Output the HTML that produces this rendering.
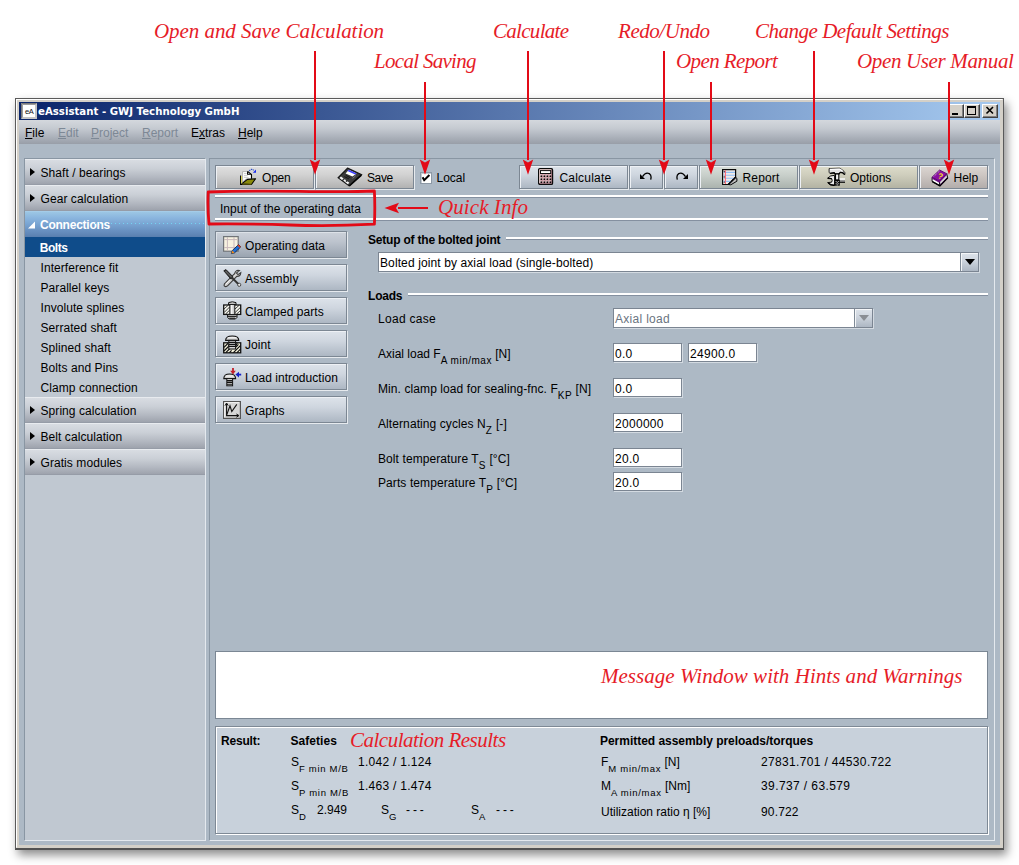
<!DOCTYPE html>
<html><head><meta charset="utf-8"><title>eAssistant</title>
<style>
html,body{margin:0;padding:0;background:#fff;}
body{width:1019px;height:865px;position:relative;overflow:hidden;font:12px "Liberation Sans",sans-serif;color:#000;}
.a{position:absolute;white-space:nowrap;}
.hw{position:absolute;white-space:nowrap;color:#e61c28;font-family:"Liberation Serif",serif;font-style:italic;font-size:21px;line-height:24px;}
#win{position:absolute;left:15px;top:98px;width:989px;height:752px;background:#adb9c5;box-sizing:border-box;
 border:1px solid #5a5a5a;border-bottom:2px solid #525252;box-shadow:3px 5px 9px rgba(0,0,0,.45);}
#frame{position:absolute;left:0;top:0;right:0;bottom:0;border:1px solid #fff;border-right-color:#d4d0c8;border-bottom-color:#d4d0c8;box-shadow:inset 0 0 0 2px #d4d0c8;}
#title{position:absolute;left:19px;top:102px;width:981px;height:18px;background:linear-gradient(90deg,#0a246a 0%,#a6caf0 100%);}
#title .t{position:absolute;left:19px;top:3px;font:bold 10.2px "DejaVu Sans",sans-serif;color:#fff;line-height:14px;white-space:nowrap;}
#menu{position:absolute;left:19px;top:120px;width:981px;height:24px;background:linear-gradient(180deg,#d4d8dd 0%,#c5cad1 35%,#abb1ba 72%,#989ea8 100%);}
.mi{position:absolute;top:126px;line-height:14px;white-space:nowrap;}
.mi.d{color:#7d8895;}
.mi u{text-decoration:underline;}
.wb{position:absolute;top:104px;width:14px;height:12px;background:#d4d0c8;border:1px solid;border-color:#fff #404040 #404040 #fff;box-shadow:inset -1px -1px 0 #808080;}
#side{position:absolute;left:24px;top:158px;width:182px;height:683px;box-sizing:border-box;background:#c0c8d1;border:1px solid #8996a3;border-right-color:#e4e9ee;border-bottom-color:#e4e9ee;}
.sh{position:absolute;left:25px;width:180px;height:26px;box-sizing:border-box;background:linear-gradient(180deg,#d8dce2 0%,#cbd0d7 35%,#b4b9c2 70%,#9ea3ad 100%);border-top:1px solid #e8ebef;border-bottom:1px solid #969ca7;}
.sh span,.si{position:absolute;left:15.5px;line-height:14px;white-space:nowrap;letter-spacing:.07px;}
.sh span{top:6px;}
.sh i{position:absolute;left:5px;top:7.5px;width:0;height:0;border-left:5.5px solid #000;border-top:4.8px solid transparent;border-bottom:4.8px solid transparent;}
.si{left:40.5px;}
#main{position:absolute;left:209px;top:158px;width:786px;height:683px;box-sizing:border-box;border:1px solid #8996a3;border-right-color:#e4e9ee;border-bottom-color:#e4e9ee;}
.btn{position:absolute;box-sizing:border-box;border:1px solid #7c8793;box-shadow:inset 1px 1px 0 #eef1f5,1px 1px 0 #e6eaee;background:linear-gradient(180deg,#dde3ea 0%,#cfd6df 40%,#adb7c3 100%);}
.btn.w{background:linear-gradient(180deg,#e4e2dc 0%,#d2d1cb 45%,#b9bab6 100%);}
.btn span{position:absolute;line-height:14px;white-space:nowrap;letter-spacing:0;}
.sep{position:absolute;height:2px;background:#fff;box-shadow:0 1px 0 #8490a0;}
.inp{position:absolute;box-sizing:border-box;height:19px;background:#fff;border:1px solid #7b8592;box-shadow:1px 1px 0 #d3dae1;}
.inp span{position:absolute;left:1px;top:2px;line-height:14px;letter-spacing:.3px;}
sub{font-size:10px;vertical-align:baseline;position:relative;top:6px;line-height:0;letter-spacing:.5px;}
.l{letter-spacing:.3px;}
.r sub{font-size:9.5px;letter-spacing:.7px;}
</style></head><body>

<div id="win"><div id="frame"></div></div>
<div id="title"><div class="t">eAssistant - GWJ Technology GmbH</div></div>
<div id="menu"></div>

<!-- title icon + window buttons -->
<svg class="a" style="left:21px;top:103px" width="16" height="16" viewBox="0 0 16 16"><rect x="0" y="0" width="16" height="16" fill="#c4c4c4"/><path d="M0.5 15.5 V0.5 H15.5" fill="none" stroke="#7a7a7a"/><path d="M1.5 14.5 V1.5 H14.5" fill="none" stroke="#9c9c9c"/><rect x="2" y="2" width="12" height="12" fill="#fff"/><text x="8.2" y="11.4" font-family="Liberation Sans, sans-serif" font-size="7.5" text-anchor="middle" fill="#111" letter-spacing="-.3">eA</text></svg>
<div class="wb" style="left:948px"><div class="a" style="left:3px;top:8px;width:6px;height:2px;background:#000"></div></div>
<div class="wb" style="left:964px"><div class="a" style="left:2px;top:1px;width:7px;height:6px;border:1px solid #000;border-top-width:2px"></div></div>
<div class="wb" style="left:982px"><svg class="a" style="left:2px;top:1px" width="10" height="9" viewBox="0 0 10 9"><path d="M1.5 1 L8 7.5 M8 1 L1.5 7.5" stroke="#000" stroke-width="1.6" fill="none"/></svg></div>

<!-- menu -->
<div class="mi" style="left:25px"><u>F</u>ile</div>
<div class="mi d" style="left:58px"><u>E</u>dit</div>
<div class="mi d" style="left:91px"><u>P</u>roject</div>
<div class="mi d" style="left:142px"><u>R</u>eport</div>
<div class="mi" style="left:191px">E<u>x</u>tras</div>
<div class="mi" style="left:238px"><u>H</u>elp</div>

<!-- sidebar -->
<div id="side"></div>
<div class="sh" style="top:159px"><i></i><span>Shaft / bearings</span></div>
<div class="sh" style="top:185px"><i></i><span>Gear calculation</span></div>
<div class="sh" style="top:211px;background:linear-gradient(180deg,#9cc6e4 0%,#8ab5de 25%,#79a4d2 50%,#6a92c2 75%,#5c82b2 100%);border-top-color:#a4cce8;border-bottom-color:#5a80b0;color:#fff;font-weight:bold"><svg class="a" style="left:3px;top:9px" width="8" height="8" viewBox="0 0 8 8"><path d="M7 0.5 L7 7.5 L0 7.5 Z" fill="#fff"/></svg><span style="letter-spacing:-.24px;left:15px">Connections</span><div class="a" style="left:70px;top:11px;width:110px;height:1px;background:repeating-linear-gradient(90deg,#74d4f4 0 1px,transparent 1px 4px)"></div></div>
<div class="a" style="left:25px;top:237px;width:180px;height:20px;background:#0f4c8a"></div>
<div class="si" style="top:241px;color:#fff;font-weight:bold;letter-spacing:-.5px;margin-left:-.7px">Bolts</div>
<div class="si" style="top:261px">Interference fit</div>
<div class="si" style="top:281px">Parallel keys</div>
<div class="si" style="top:301px">Involute splines</div>
<div class="si" style="top:321px">Serrated shaft</div>
<div class="si" style="top:341px">Splined shaft</div>
<div class="si" style="top:361px">Bolts and Pins</div>
<div class="si" style="top:381px">Clamp connection</div>
<div class="sh" style="top:397px"><i></i><span>Spring calculation</span></div>
<div class="sh" style="top:423px"><i></i><span>Belt calculation</span></div>
<div class="sh" style="top:449px"><i></i><span>Gratis modules</span></div>

<div id="main"></div>

<!-- toolbar -->
<div class="btn" style="left:215px;top:165px;width:99px;height:24px;background:linear-gradient(180deg,#e0e0e0 0%,#d2d2d2 40%,#b2b2b2 100%)"><span style="left:46px;top:5px;letter-spacing:-.2px">Open</span></div>
<div class="btn" style="left:315px;top:165px;width:99px;height:24px;background:linear-gradient(180deg,#e0e0e0 0%,#d2d2d2 40%,#b2b2b2 100%)"><span style="left:51px;top:5px;letter-spacing:-.4px">Save</span></div>
<div class="a" style="left:420px;top:172px;width:12px;height:12px;box-sizing:border-box;background:#fff;border:1px solid #8d99a6;box-shadow:inset 1px 1px 0 #c4ccd4"></div>
<svg class="a" style="left:421px;top:173px" width="10" height="10" viewBox="0 0 10 10"><path d="M1.6 4.2 L3.2 7.2 L8.4 2" stroke="#000" stroke-width="2" fill="none"/></svg>
<div class="a" style="left:436.5px;top:171px;line-height:14px">Local</div>
<div class="btn" style="left:519px;top:165px;width:109px;height:24px"><span style="left:39.5px;top:5px;letter-spacing:.2px">Calculate</span></div>
<div class="btn" style="left:629px;top:165px;width:34px;height:24px"></div>
<div class="btn" style="left:664px;top:165px;width:34px;height:24px"></div>
<div class="btn" style="left:699px;top:165px;width:99px;height:24px;background:linear-gradient(180deg,#d9dfda 0%,#c9d0cb 40%,#abb3ae 100%)"><span style="left:42.5px;top:5px;letter-spacing:.15px">Report</span></div>
<div class="btn" style="left:799px;top:165px;width:119px;height:24px;background:linear-gradient(180deg,#dddccb 0%,#cfcebd 40%,#b3b3a3 100%)"><span style="left:50px;top:5px">Options</span></div>
<div class="btn" style="left:919px;top:165px;width:69px;height:24px;background:linear-gradient(180deg,#dcd6d2 0%,#cec7c3 40%,#b3adab 100%)"><span style="left:33.5px;top:5px">Help</span></div>

<!-- quick info -->
<div class="sep" style="left:215px;top:195px;width:773px"></div>
<div class="a" style="left:220px;top:202px;line-height:14px;letter-spacing:.03px">Input of the operating data</div>
<div class="sep" style="left:215px;top:218px;width:773px"></div>

<!-- left nav buttons -->
<div class="btn" style="left:215px;top:231px;width:132px;height:27px;background:linear-gradient(180deg,#cbd1d9 0%,#bcc3cd 40%,#9aa4b0 100%);box-shadow:inset 1px 1px 0 #dde2e8,1px 1px 0 #e6eaee"><span style="left:29px;top:7px;letter-spacing:.05px">Operating data</span></div>
<div class="btn" style="left:215px;top:264px;width:132px;height:27px"><span style="left:29px;top:7px;letter-spacing:.2px">Assembly</span></div>
<div class="btn" style="left:215px;top:297px;width:132px;height:27px"><span style="left:29px;top:7px;letter-spacing:.05px">Clamped parts</span></div>
<div class="btn" style="left:215px;top:330px;width:132px;height:27px"><span style="left:29px;top:7px;letter-spacing:.05px">Joint</span></div>
<div class="btn" style="left:215px;top:363px;width:132px;height:27px"><span style="left:29px;top:7px;letter-spacing:.05px">Load introduction</span></div>
<div class="btn" style="left:215px;top:396px;width:132px;height:27px"><span style="left:29px;top:7px;letter-spacing:.05px">Graphs</span></div>

<!-- form -->
<div class="a" style="left:368px;top:233px;line-height:14px;font-weight:bold;letter-spacing:-.2px">Setup of the bolted joint</div>
<div class="sep" style="left:506px;top:237px;width:482px"></div>
<div class="inp" style="left:378px;top:252px;width:601px;height:20px"><span style="letter-spacing:.11px;left:1px;top:3px">Bolted joint by axial load (single-bolted)</span></div>
<div class="btn" style="left:960px;top:253px;width:18px;height:18px;border:none;border-left:1px solid #7f8a96;box-shadow:inset 1px 1px 0 #f4f6f8"><svg class="a" style="left:4px;top:6px" width="10" height="6" viewBox="0 0 10 6"><path d="M0 0 H10 L5 6 Z" fill="#000"/></svg></div>
<div class="a" style="left:368px;top:289px;line-height:14px;font-weight:bold;letter-spacing:-.2px">Loads</div>
<div class="sep" style="left:408px;top:293px;width:580px"></div>

<div class="a l" style="left:378px;top:312px;line-height:14px">Load case</div>
<div class="inp" style="left:613px;top:308px;width:260px;height:20px"><span style="color:#6a7480;top:3px">Axial load</span></div>
<div class="btn" style="left:854px;top:309px;width:18px;height:18px;border:none;border-left:1px solid #7f8a96;box-shadow:inset 1px 1px 0 #f4f6f8"><svg class="a" style="left:4px;top:6px" width="10" height="6" viewBox="0 0 10 6"><path d="M0 0 H10 L5 6 Z" fill="#8a8e94"/></svg></div>

<div class="a" style="left:378px;top:347px;line-height:14px">Axial load F<sub>A min/max</sub> [N]</div>
<div class="inp" style="left:613px;top:343px;width:69px;height:19px"><span style="top:3px">0.0</span></div>
<div class="inp" style="left:688px;top:343px;width:69px;height:19px"><span style="top:3px">24900.0</span></div>

<div class="a" style="left:378px;top:382px;line-height:14px;letter-spacing:.09px">Min. clamp load for sealing-fnc. F<sub>KP</sub> [N]</div>
<div class="inp" style="left:613px;top:378px;width:69px;height:19px"><span style="top:3px">0.0</span></div>

<div class="a" style="left:378px;top:417px;line-height:14px;letter-spacing:.09px">Alternating cycles N<sub>Z</sub> [-]</div>
<div class="inp" style="left:613px;top:413px;width:69px;height:19px"><span style="top:3px">2000000</span></div>

<div class="a" style="left:378px;top:452px;line-height:14px;letter-spacing:.09px">Bolt temperature T<sub>S</sub> [°C]</div>
<div class="inp" style="left:613px;top:448px;width:69px;height:19px"><span style="top:3px">20.0</span></div>
<div class="a" style="left:378px;top:476px;line-height:14px;letter-spacing:.09px">Parts temperature T<sub>P</sub> [°C]</div>
<div class="inp" style="left:613px;top:472px;width:69px;height:19px"><span style="top:3px">20.0</span></div>

<!-- message window -->
<div class="a" style="left:215px;top:651px;width:773px;height:68px;box-sizing:border-box;background:#fff;border:1px solid #7b8794"></div>

<!-- result panel -->
<div class="a" style="left:215px;top:726px;width:773px;height:108px;box-sizing:border-box;background:#c8d1db;border:1px solid #7e8995;box-shadow:inset 1px 1px 0 #fff,1px 1px 0 #fff"></div>
<div class="a" style="left:221px;top:734px;line-height:14px;font-weight:bold;letter-spacing:-.2px">Result:</div>
<div class="a" style="left:290.5px;top:734px;line-height:14px;font-weight:bold;letter-spacing:.05px">Safeties</div>
<div class="a r" style="left:291px;top:755px;line-height:14px">S<sub>F min M/B</sub></div>
<div class="a" style="left:358px;top:755px;line-height:14px;letter-spacing:.27px">1.042 / 1.124</div>
<div class="a r" style="left:291px;top:779px;line-height:14px">S<sub>P min M/B</sub></div>
<div class="a" style="left:358px;top:779px;line-height:14px;letter-spacing:.27px">1.463 / 1.474</div>
<div class="a r" style="left:291px;top:803px;line-height:14px">S<sub>D</sub></div>
<div class="a" style="left:317px;top:803px;line-height:14px;letter-spacing:0">2.949</div>
<div class="a r" style="left:381px;top:803px;line-height:14px">S<sub>G</sub></div>
<div class="a" style="left:406px;top:803px;line-height:14px;letter-spacing:2.9px">---</div>
<div class="a r" style="left:471px;top:803px;line-height:14px">S<sub>A</sub></div>
<div class="a" style="left:496px;top:803px;line-height:14px;letter-spacing:2.9px">---</div>
<div class="a" style="left:600px;top:734px;line-height:14px;font-weight:bold;letter-spacing:-.03px">Permitted assembly preloads/torques</div>
<div class="a r" style="left:601px;top:755px;line-height:14px">F<sub>M min/max</sub> [N]</div>
<div class="a" style="left:761px;top:755px;line-height:14px;letter-spacing:.34px">27831.701 / 44530.722</div>
<div class="a r" style="left:601px;top:779px;line-height:14px">M<sub>A min/max</sub> [Nm]</div>
<div class="a" style="left:761px;top:779px;line-height:14px;letter-spacing:.4px">39.737 / 63.579</div>
<div class="a" style="left:601px;top:805px;line-height:14px">Utilization ratio η [%]</div>
<div class="a" style="left:761px;top:805px;line-height:14px;letter-spacing:.15px">90.722</div>

<!-- annotations -->
<div class="hw" style="left:154px;top:19px;letter-spacing:-.06px">Open and Save Calculation</div>
<div class="hw" style="left:374px;top:49px;letter-spacing:-.7px">Local Saving</div>
<div class="hw" style="left:493px;top:19px;letter-spacing:-.7px">Calculate</div>
<div class="hw" style="left:618px;top:19px;letter-spacing:-.45px">Redo/Undo</div>
<div class="hw" style="left:676px;top:49px;letter-spacing:-.6px">Open Report</div>
<div class="hw" style="left:755px;top:19px;letter-spacing:-.49px">Change Default Settings</div>
<div class="hw" style="left:857px;top:49px;letter-spacing:-.35px">Open User Manual</div>
<div class="hw" style="left:438px;top:195px;letter-spacing:.08px">Quick Info</div>
<div class="hw" style="left:601px;top:664px;letter-spacing:.03px">Message Window with Hints and Warnings</div>
<div class="hw" style="left:350px;top:728px;letter-spacing:-.5px">Calculation Results</div>
<svg class="a" style="left:0;top:0" width="1019" height="865" viewBox="0 0 1019 865" fill="none" stroke="#e30a17" stroke-width="2">
<g fill="#e30a17">
<path d="M315 51 V160"/><path d="M315 174.8 L309.8 159.5 L315 162.5 L320.2 159.5 Z" stroke="none"/>
<path d="M425 82 V160"/><path d="M425 174.8 L419.8 159.5 L425 162.5 L430.2 159.5 Z" stroke="none"/>
<path d="M528 51 V160"/><path d="M528 174.8 L522.8 159.5 L528 162.5 L533.2 159.5 Z" stroke="none"/>
<path d="M664 51 V160"/><path d="M664 174.8 L658.8 159.5 L664 162.5 L669.2 159.5 Z" stroke="none"/>
<path d="M711 82 V160"/><path d="M711 174.8 L705.8 159.5 L711 162.5 L716.2 159.5 Z" stroke="none"/>
<path d="M814 51 V160"/><path d="M814 174.8 L808.8 159.5 L814 162.5 L819.2 159.5 Z" stroke="none"/>
<path d="M949 82 V160"/><path d="M949 174.8 L943.8 159.5 L949 162.5 L954.2 159.5 Z" stroke="none"/>
<path d="M428 208 H398"/><path d="M384.5 208 L399 202.8 L396 208 L399 213.2 Z" stroke="none"/>
</g>
<path d="M208.2 192 Q250 190.6 300 191.4 T374.4 191 Q375.2 208 374.4 224.2 Q330 226.4 290 225 T209 224 Q207.4 208 208.2 192 Z" stroke-width="2.8" stroke-linejoin="round"/>
</svg>

<!-- toolbar icons -->
<svg class="a" style="left:240px;top:168px" width="17" height="18" viewBox="0 0 17 18">
<path d="M0.6 7.6 V16.5 H11.6" fill="none" stroke="#000" stroke-width="1.1"/>
<path d="M1.7 8 V15.6" stroke="#dcd648" stroke-width="1.2"/>
<path d="M2.6 3.6 H7.9 L11.4 6.4 V11 H6 L2.6 14 Z" fill="#fff" stroke="#9c9c9c" stroke-width=".7"/>
<path d="M7.6 3.4 L11.5 6.4 V10.8 M7.6 3.4 V6.2 H11.2" fill="none" stroke="#000" stroke-width="1.1"/>
<path d="M4 5.6 H6.6 M4 7.6 H7.6 M4 9.4 H8.6" stroke="#c4c4c4" stroke-width=".9"/>
<path d="M2 15.6 L7.4 11.4 L15.6 10.7 L11.6 16.2 Z" fill="#8a8a0a" stroke="#000" stroke-width="1.1" stroke-linejoin="round"/>
<path d="M2.2 16 H11.4" stroke="#b0a818" stroke-width=".8"/>
<path d="M9.2 2.9 Q11.6 0 14 2.6" fill="none" stroke="#2c4cc8" stroke-width="1.1" stroke-dasharray="1.3 .7"/>
<path d="M16 1.6 V4.8 H12.8 Z" fill="#1a2cf0"/>
</svg>
<svg class="a" style="left:337px;top:167px" width="26" height="20" viewBox="0 0 26 20">
<path d="M10.5 1.1 L24.6 7.7 L12.1 18.9 L1.1 10.8 Z" fill="#3a3a3a" stroke="#141414" stroke-width="1.1"/>
<path d="M24.4 8.2 L12.3 19" fill="none" stroke="#050505" stroke-width="1.6"/>
<path d="M11.8 2.8 L19.6 6.4 L15.5 9.6 L8.6 6.4 Z" fill="#fff"/>
<path d="M11.8 2.8 L19.6 6.4 L18.2 7.5 L10.5 3.9 Z" fill="#3a3cff"/>
<path d="M2.4 10.9 L4 9.6 L6.6 11.5 L5 12.9 Z M6.2 13.6 L7.8 12.3 L12.4 15.7 L10.8 17.2 Z" fill="#f4f4f4"/>
<path d="M8.4 14 L9.6 13 L10.8 13.9 L9.6 14.9 Z" fill="#222"/>
<path d="M8.8 8.4 L13.2 10.6 M7.4 9.6 L11.8 11.8" stroke="#111" stroke-width=".9"/>
<path d="M15.6 11.4 L18.8 8.6" stroke="#8a8a8a" stroke-width=".8"/>
</svg>
<svg class="a" style="left:538px;top:168px" width="16" height="18" viewBox="0 0 16 18">
<rect x="0.7" y="0.7" width="13.8" height="15.7" rx="1.2" fill="#d09aa4" stroke="#0a0a0a" stroke-width="1.4"/>
<path d="M1.6 15 V1.6 H13.4" fill="none" stroke="#f2dcd8" stroke-width=".8"/>
<rect x="2.5" y="2.6" width="10.2" height="2.9" fill="#fff" stroke="#111" stroke-width="1"/>
<rect x="1.8" y="6.7" width="2" height="2" fill="#f4e4e6"/><rect x="2.5" y="7.4" width="1.7" height="1.7" fill="#0c0406"/><rect x="4.8" y="6.7" width="2" height="2" fill="#f4e4e6"/><rect x="5.5" y="7.4" width="1.7" height="1.7" fill="#0c0406"/><rect x="7.8" y="6.7" width="2" height="2" fill="#f4e4e6"/><rect x="8.5" y="7.4" width="1.7" height="1.7" fill="#0c0406"/><rect x="10.8" y="6.7" width="2" height="2" fill="#f4e4e6"/><rect x="11.5" y="7.4" width="1.7" height="1.7" fill="#0c0406"/><rect x="1.8" y="9.7" width="2" height="2" fill="#f4e4e6"/><rect x="2.5" y="10.4" width="1.7" height="1.7" fill="#0c0406"/><rect x="4.8" y="9.7" width="2" height="2" fill="#f4e4e6"/><rect x="5.5" y="10.4" width="1.7" height="1.7" fill="#0c0406"/><rect x="7.8" y="9.7" width="2" height="2" fill="#f4e4e6"/><rect x="8.5" y="10.4" width="1.7" height="1.7" fill="#0c0406"/><rect x="10.8" y="9.7" width="2" height="2" fill="#f4e4e6"/><rect x="11.5" y="10.4" width="1.7" height="1.7" fill="#0c0406"/><rect x="1.8" y="12.7" width="2" height="2" fill="#f4e4e6"/><rect x="2.5" y="13.4" width="1.7" height="1.7" fill="#0c0406"/><rect x="4.8" y="12.7" width="2" height="2" fill="#f4e4e6"/><rect x="5.5" y="13.4" width="1.7" height="1.7" fill="#0c0406"/><rect x="7.8" y="12.7" width="2" height="2" fill="#f4e4e6"/><rect x="8.5" y="13.4" width="1.7" height="1.7" fill="#0c0406"/><rect x="10.8" y="12.7" width="2" height="2" fill="#f4e4e6"/><rect x="11.5" y="13.4" width="1.7" height="1.7" fill="#0c0406"/>
</svg>
<svg class="a" style="left:639px;top:172px" width="14" height="9" viewBox="0 0 14 9">
<path d="M3.5 4.6 Q6.5 -0.3 10.3 1.6 Q12.9 3.2 11.7 7.6" fill="none" stroke="#000" stroke-width="1.3"/>
<path d="M1 2 V7 H6 Z" fill="#000"/>
</svg>
<svg class="a" style="left:675px;top:172px" width="14" height="9" viewBox="0 0 14 9">
<path d="M10.5 4.6 Q7.5 -0.3 3.7 1.6 Q1.1 3.2 2.3 7.6" fill="none" stroke="#000" stroke-width="1.3"/>
<path d="M13 2 V7 H8 Z" fill="#000"/>
</svg>
<svg class="a" style="left:722px;top:169px" width="16" height="17" viewBox="0 0 16 17">
<path d="M13.8 8.4 L14.9 9.4 V12.2 L8.8 15.8 L6.4 15.5 Z" fill="#bdbdbd" stroke="#0a0a0a" stroke-width="1"/>
<path d="M0.6 0.6 H13.6 V8.2 L6.3 15.5 H0.6 Z" fill="#f1ebe8" stroke="#0a0a0a" stroke-width="1.2"/>
<path d="M1.4 3.4 H13 M1.4 6.3 H13 M1.4 9.2 H12 M1.4 12.4 H9" stroke="#8fc0f4" stroke-width="1.1"/>
<path d="M3.4 1.2 V15" stroke="#ff6a78" stroke-width="1.1"/>
<path d="M13.6 8.2 L6.3 15.5" stroke="#0a0a0a" stroke-width="1.5"/>
<circle cx="2.2" cy="2.7" r=".6" fill="#111"/><circle cx="2.2" cy="7.9" r=".6" fill="#111"/><circle cx="2.2" cy="13.1" r=".6" fill="#111"/>
</svg>
<svg class="a" style="left:827px;top:167px" width="19" height="20" viewBox="0 0 19 20">
<path d="M7.6 8.4 Q3.4 8 0.6 11.2 L4.6 11.6 Q5.8 13.4 4.6 15.2 L0.6 15.6 Q3 19 7.6 18.4 Z" fill="#ececec" stroke="#0a0a0a" stroke-width="1"/>
<path d="M1.4 15.9 Q3.4 18.6 7.4 18.3" fill="none" stroke="#000" stroke-width="1.5"/>
<path d="M0.8 11.3 L4.6 11.7" stroke="#000" stroke-width="1.3"/>
<rect x="11.8" y="11.2" width="6.2" height="4.2" fill="#f6f6f6"/>
<path d="M11.8 13.6 H18" stroke="#9a9a9a" stroke-width="1.4"/>
<path d="M11.8 15.2 H18" stroke="#000" stroke-width="1.3"/>
<path d="M2.1 1.6 L12.4 1.2 Q16 2.4 18 5.8 L17.7 7.8 Q16.4 5.2 13.2 5.4 L11.8 7 H8 L7.2 5.8 L3.1 6.4 L2.1 5.6 Z" fill="#e2e2e2" stroke="#1a1a1a" stroke-width=".9"/>
<path d="M3 2.4 L12 2 Q14 2.6 15.4 4" fill="none" stroke="#fff" stroke-width="1.2"/>
<path d="M3.1 6.4 L7.2 5.8 L8 7.2 H11.8 L13.2 5.5 Q16.2 5.2 17.6 7.6" fill="none" stroke="#000" stroke-width="1.3"/>
<rect x="8.5" y="7" width="3.3" height="6" fill="#f2f2f2" stroke="#000" stroke-width="1.1"/>
<rect x="7.4" y="12.8" width="5.4" height="5.9" fill="#060606"/>
<path d="M8.6 14 h1.1 v1.1 h-1.1z M10.8 14 h1.1 v1.1 h-1.1z M9.7 15.1 h1.1 v1.1 h-1.1z M8.6 16.2 h1.1 v1.1 h-1.1z M10.8 16.2 h1.1 v1.1 h-1.1z M9.7 17.3 h1.1 v1.1 h-1.1z" fill="#b4b4b4"/>
</svg>
<svg class="a" style="left:931px;top:169px" width="18" height="18" viewBox="0 0 18 18">
<path d="M1.1 8.2 L8.3 12.1 L8.9 16.7 L1.1 12.4 Z" fill="#fafafa" stroke="#0a0a0a" stroke-width="1"/>
<path d="M8.3 12.1 L15.7 4.7 L16.7 8.9 L9.2 16.7 Z" fill="#d8d8d8" stroke="#0a0a0a" stroke-width="1"/>
<path d="M9 16.4 L16.4 8.8" stroke="#8a10a0" stroke-width="1.2"/>
<path d="M1.3 12.6 L8.9 16.9 L16.8 8.8" fill="none" stroke="#000" stroke-width="1.3"/>
<path d="M8.6 1 L15.7 4.7 L8.3 12.1 L1.1 8.2 Z" fill="#8a10a2" stroke="#5a0870" stroke-width=".9"/>
<path d="M1.1 8.2 L1.1 9.8 L8.3 13.8 L15.8 6 L15.7 4.7 L8.3 12.1 Z" fill="#6a0a82"/>
<path d="M2.6 7.6 L8.8 1.8" stroke="#d8b0e0" stroke-width="1" stroke-dasharray="1 1"/>
<text x="9.4" y="9.8" font-family="Liberation Sans, sans-serif" font-size="8" font-weight="bold" fill="#f6ea10" text-anchor="middle" transform="rotate(18 9.4 7)">?</text>
</svg>

<!-- nav icons -->
<svg class="a" style="left:223px;top:236px" width="19" height="19" viewBox="0 0 19 19">
<rect x="0.6" y="0.6" width="14.6" height="14.6" fill="#f7f2e0" stroke="#707478" stroke-width="1.2"/>
<path d="M4.4 1 V15 M11 1 V15" stroke="#c9b9bb" stroke-width="1"/>
<path d="M1 3.6 H15 M1 11.6 H15" stroke="#c9b9bb" stroke-width="1"/>
<path d="M8.4 17.6 L9.4 14.4 L15.6 8.6 L17.8 10.8 L11.6 16.8 Z" fill="#1f6fd6" stroke="#10284c" stroke-width=".9"/>
<path d="M14.4 9.6 L15.6 8.6 L17.8 10.8 L16.8 11.8 Z" fill="#e4401c"/>
<path d="M8.4 17.6 L9.4 14.4 L11.6 16.8 Z" fill="#f08a1c"/>
</svg>
<svg class="a" style="left:223px;top:269px" width="19" height="19" viewBox="0 0 19 19">
<path d="M16.4 1.6 Q12.6 0.6 11.6 4.6 L2.6 13.6 Q0.8 14.8 1.2 16.8 Q3 18.4 4.8 16.6 L13.8 7.4 Q17.4 7.6 17.8 3.6 L15 5.6 L13.4 4 Z" fill="#d4d4d4" stroke="#3c3c3c" stroke-width="1.1"/>
<path d="M3 15 L11 6.6" stroke="#fff" stroke-width=".8"/>
<path d="M0.8 1.8 L3 0.6 L10.2 8 L8 10.2 Z" fill="#3a3a3a" stroke="#1c1c1c" stroke-width=".9"/>
<path d="M2.6 2 L8.4 8" stroke="#8a8a8a" stroke-width=".8"/>
<path d="M9.2 9 L15.6 15.2" stroke="#333" stroke-width="1.9"/>
<circle cx="16.2" cy="15.8" r="1.6" fill="#e8e8e8" stroke="#3c3c3c" stroke-width=".9"/>
</svg>
<svg class="a" style="left:223px;top:301px" width="19" height="20" viewBox="0 0 19 20">
<path d="M5.6 4 V1.6 Q9.4 0 13 1.6 V4 Z" fill="#d6d6d6" stroke="#111" stroke-width="1"/>
<rect x="0.7" y="4" width="17" height="9.4" fill="#fafaf2" stroke="#111" stroke-width="1.3"/>
<path d="M1 8 L5 4.4 M1 11.6 L6.6 6 M2.6 13 L6.6 9.2 M12 8 L16 4.4 M12 11.6 L17.4 6.4 M13.6 13 L17.4 9.6" stroke="#222" stroke-width=".9"/>
<rect x="6.8" y="3.4" width="5" height="10.6" fill="#cfcfcf" stroke="#111" stroke-width="1"/>
<rect x="8" y="4" width="1.4" height="9.6" fill="#f4f4f4"/>
<path d="M4.6 13.6 H14 V16.4 L12.4 18 H6.2 L4.6 16.4 Z" fill="#c8c8c8" stroke="#111" stroke-width="1"/>
<path d="M5 15.4 H13.6 M6.4 17.2 H12" stroke="#111" stroke-width="1"/>
</svg>
<svg class="a" style="left:223px;top:335px" width="19" height="19" viewBox="0 0 19 19">
<rect x="0.7" y="7.8" width="17" height="10" fill="#f6f4de" stroke="#111" stroke-width="1.3"/>
<path d="M1 12.4 L4.4 9 M1 16 L6 11 M2.8 17.6 L7.4 13 M6.4 17.6 L8.6 15.4 M10.4 17.6 L17.4 10.6 M14 17.6 L17.4 14.2 M13 12 L15.4 9.4" stroke="#111" stroke-width="1.2"/>
<path d="M4.4 8 L7 13.6 H11.6 L14.2 8 Z" fill="#f6f4de" stroke="#111" stroke-width="1"/>
<path d="M2.6 5.4 Q2.6 1 9.2 1 Q15.8 1 15.8 5.4 Z" fill="#d0d0d0" stroke="#111" stroke-width="1.1"/>
<path d="M4.6 2.8 H13.6" stroke="#fff" stroke-width="1"/>
<rect x="5.8" y="5.4" width="6.8" height="8.6" fill="#dcdcdc" stroke="#111" stroke-width="1"/>
<path d="M6 7.4 H12.4 M6 9.4 H12.4 M6 11.4 H12.4" stroke="#111" stroke-width="1.1"/>
</svg>
<svg class="a" style="left:223px;top:367px" width="19" height="20" viewBox="0 0 19 20">
<path d="M0.8 11.6 Q0.8 7 6.6 7 Q12.6 7 12.6 11.6 Z" fill="#d0d0d0" stroke="#111" stroke-width="1.1"/>
<path d="M2.6 9 H10.6" stroke="#fff" stroke-width="1"/>
<rect x="3.8" y="11.6" width="5.8" height="7.2" fill="#e0e0e0" stroke="#111" stroke-width="1"/>
<path d="M4 13.6 H9.4 M4 15.4 H9.4 M4 17.2 H9.4" stroke="#111" stroke-width="1.1"/>
<path d="M10 1 V4.4" stroke="#c2202a" stroke-width="1.8"/><path d="M7.2 3.8 H12.8 L10 7.4 Z" fill="#c2202a"/>
<path d="M18.2 7.6 H15.4" stroke="#1622c8" stroke-width="1.8"/><path d="M16 4.8 V10.4 L12.4 7.6 Z" fill="#1622c8"/>
</svg>
<svg class="a" style="left:223px;top:401px" width="18" height="18" viewBox="0 0 18 18">
<rect x="0.6" y="0.6" width="16.8" height="16.8" fill="#d6d6d6" stroke="#555" stroke-width="1.2"/>
<path d="M1.6 16.4 V1.6 H16.4" fill="none" stroke="#f4f4f4" stroke-width="1"/>
<path d="M3.6 3 V14.6 H15" fill="none" stroke="#111" stroke-width="1.1"/>
<path d="M2 4.6 L3.6 2 L5.2 4.6 M13.4 13 L16 14.6 L13.4 16.2" fill="none" stroke="#111" stroke-width="1"/>
<path d="M3.8 13.6 L7 4.8 L8.8 10.6 L13.8 3.4" fill="none" stroke="#111" stroke-width="1.1"/>
</svg>

</body></html>
